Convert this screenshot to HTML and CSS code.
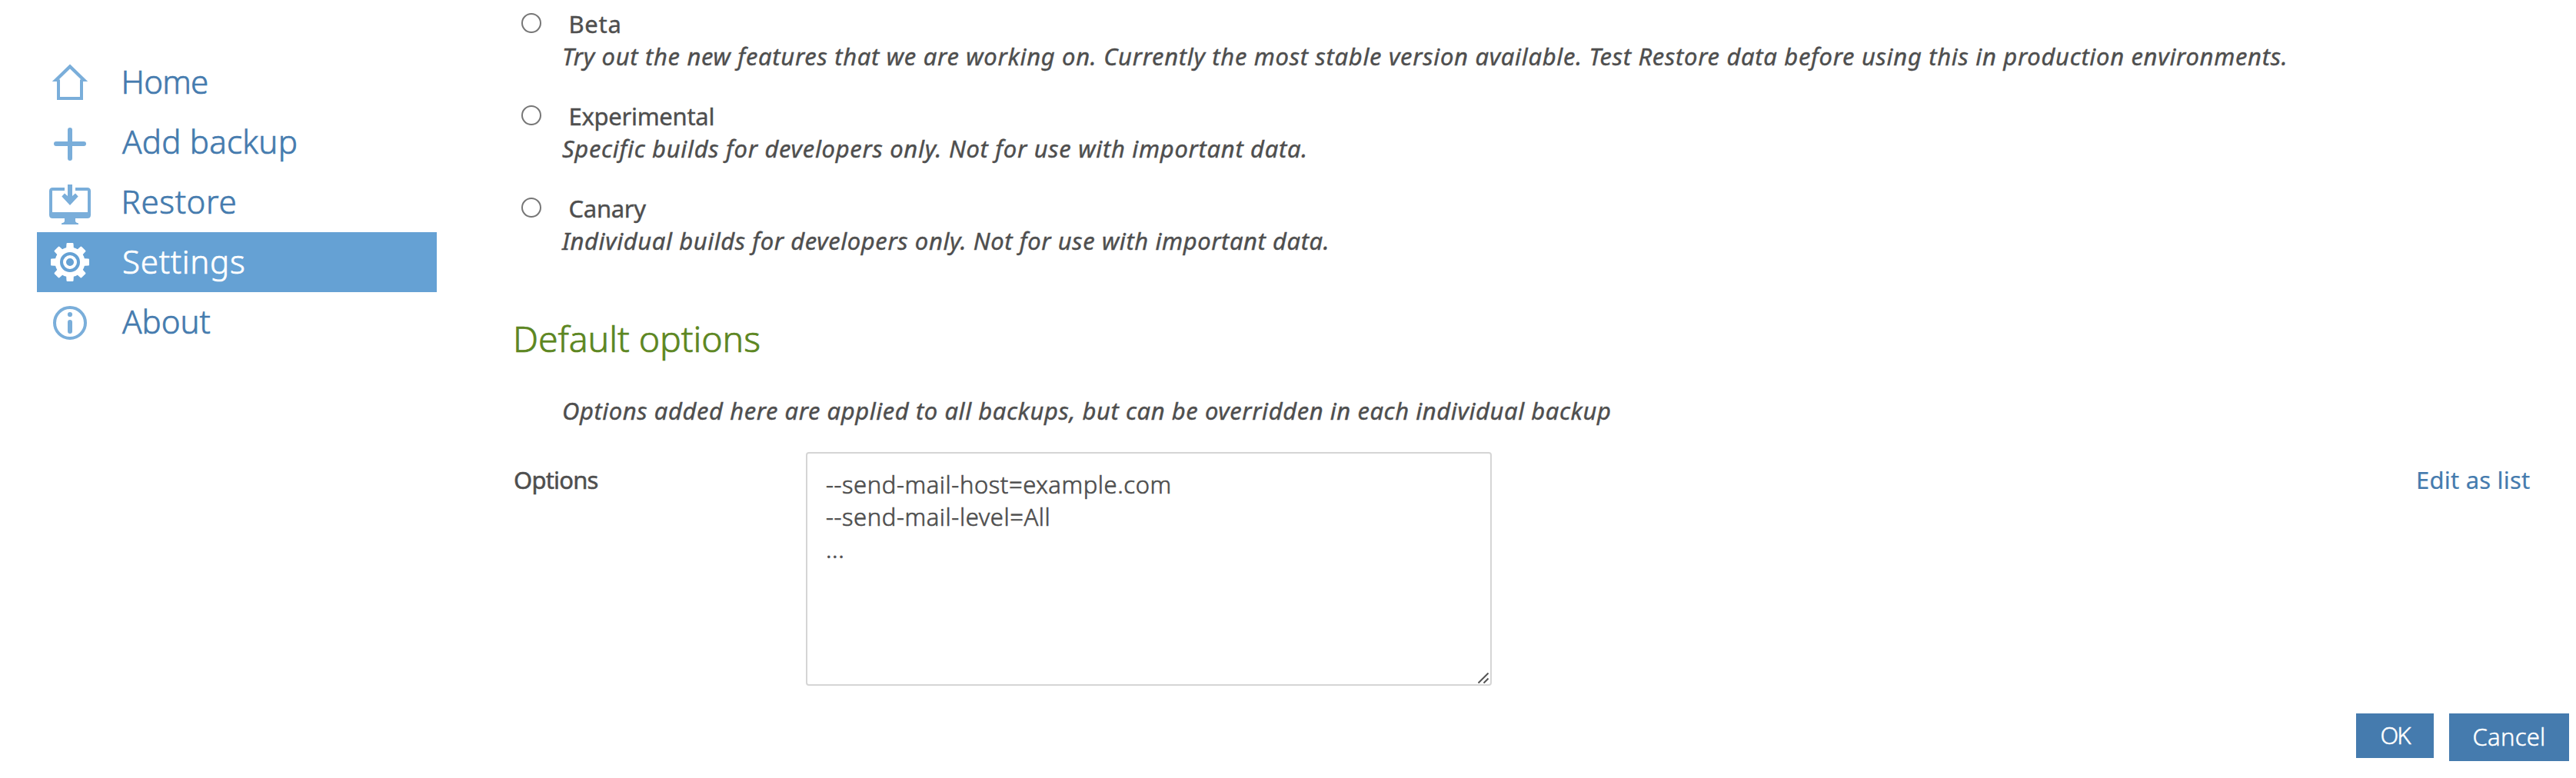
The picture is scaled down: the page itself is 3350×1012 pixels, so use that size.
FILE: index.html
```html
<!DOCTYPE html>
<html lang="en">
<head>
<meta charset="utf-8">
<title>Settings</title>
<link rel="stylesheet" href="styles.css">
</head>
<body>
<div class="app">
  <nav class="menu">
    <a class="item">
      <svg class="icon" viewBox="0 0 60 78"><path class="fill" fill-rule="evenodd" d="M33 15.500L56.200 38H50V62H16V38H9.800ZM33 21.500L18.500 35.500L20 35.500V58H46V35.500L47.500 35.500Z"/></svg>
      <span class="name home">Home</span>
    </a>
    <a class="item">
      <svg class="icon" viewBox="0 0 60 78"><path class="plus" d="M33 23V60M15 41H51"/></svg>
      <span class="name add">Add backup</span>
    </a>
    <a class="item">
      <svg class="icon" viewBox="0 0 60 78"><path class="fill" fill-rule="evenodd" d="M26 20V24H10V52H56V24H40V20H55.500Q60 20 60 24.500V55.500Q60 60 55.500 60H40V64Q40.500 65.500 44 66.500V68H22V66.500Q25.500 65.500 26 64V60H10.500Q6 60 6 55.500V24.500Q6 20 10.500 20Z"/><path class="fill" d="M30 16H36V31L40 27.500L43.700 31.500L33 43L22.300 31.500L26 27.500L30 31Z"/></svg>
      <span class="name restore">Restore</span>
    </a>
    <a class="item active">
      <svg class="icon" viewBox="0 0 60 78">
        <g class="fill">
          <path id="tooth" d="M28 24L28.500 15Q28.600 14 29.600 14H36.400Q37.400 14 37.500 15L38 24Z"/>
          <use href="#tooth" transform="rotate(45 33 39)"/><use href="#tooth" transform="rotate(90 33 39)"/><use href="#tooth" transform="rotate(135 33 39)"/><use href="#tooth" transform="rotate(180 33 39)"/><use href="#tooth" transform="rotate(225 33 39)"/><use href="#tooth" transform="rotate(270 33 39)"/><use href="#tooth" transform="rotate(315 33 39)"/>
          <path fill-rule="evenodd" d="M33 19.500A19.500 19.500 0 1 1 33 58.500A19.500 19.500 0 1 1 33 19.500ZM33 26A13 13 0 1 0 33 52A13 13 0 1 0 33 26Z"/>
        </g>
        <circle class="ring" cx="33" cy="39" r="7"/>
      </svg>
      <span class="name settings">Settings</span>
    </a>
    <a class="item">
      <svg class="icon" viewBox="0 0 60 78"><circle class="ring" cx="33" cy="40" r="20"/><circle class="fill" cx="33" cy="29" r="3.100"/><path class="plus" d="M33 39V51"/></svg>
      <span class="name about">About</span>
    </a>
  </nav>

  <main class="content">
    <div class="channels">
      <div class="channel">
        <label class="choice"><input type="radio" name="channel"><span class="label beta">Beta</span></label>
        <p class="hint">Try out the new features that we are working on. Currently the most stable version available. Test Restore data before using this in production environments.</p>
      </div>
      <div class="channel">
        <label class="choice"><input type="radio" name="channel"><span class="label">Experimental</span></label>
        <p class="hint">Specific builds for developers only. Not for use with important data.</p>
      </div>
      <div class="channel">
        <label class="choice"><input type="radio" name="channel"><span class="label">Canary</span></label>
        <p class="hint wide">Individual builds for developers only. Not for use with important data.</p>
      </div>
    </div>

    <h2 class="heading">Default options</h2>
    <p class="hint intro">Options added here are applied to all backups, but can be overridden in each individual backup</p>

    <div class="field">
      <label class="caption" for="options">Options</label>
      <div class="editor">
        <textarea id="options" class="box" spellcheck="false">--send-mail-host=example.com
--send-mail-level=All
...</textarea>
        <svg class="grip" viewBox="0 0 14 14"><path d="M.500 13.500L13.500 .500M7.500 13.500L13.500 7.500"/></svg>
      </div>
      <a class="toggle">Edit as list</a>
    </div>

    <div class="buttons">
      <button class="button ok">OK</button>
      <button class="button cancel">Cancel</button>
    </div>
  </main>
</div>
</body>
</html>
```
FILE: styles.css
```css
* { box-sizing: border-box; }
body {
  margin: 0;
  background: #fff;
  color: #4e4e4e;
  font: 400 31px/40px "Noto Sans", "Open Sans", sans-serif;
}
p, h2 { margin: 0; }
.app { display: flex; height: 1012px; overflow: hidden; }

.menu { width: 520px; margin: 68px 100px 0 48px; flex: none; }
.item {
  display: flex;
  height: 78px;
  padding-left: 10px;
  color: #457bae;
}
.icon { width: 60px; height: 78px; flex: none; color: #7aaeda; }
.name {
  padding-top: 9px;
  font-size: 42px;
  line-height: 57px;
  font-weight: 300;
  white-space: nowrap;
  -webkit-text-stroke: .7px currentColor;
}
.home { letter-spacing: -.75px; margin-left: 39.500px; }
.add { letter-spacing: .27px; margin-left: 41px; }
.restore { letter-spacing: .69px; margin-left: 39.500px; }
.settings { letter-spacing: .76px; margin-left: 41px; }
.about { margin-left: 41px; }
.active { background: #65a1d4; color: #fff; }
.active .icon { color: #fff; }
.fill { fill: currentColor; }
.plus { stroke: currentColor; stroke-width: 6; stroke-linecap: round; fill: none; }
.ring { stroke: currentColor; stroke-width: 4; fill: none; }

.content { flex: 1; padding-top: 11px; }
.channels { display: flex; flex-direction: column; gap: 38px; padding-left: 10px; }
.choice { display: flex; align-items: flex-start; }
.choice input {
  appearance: none;
  flex: none;
  width: 26px;
  height: 26px;
  margin: 6px 35.500px 0 0;
  border: 2px solid #767676;
  border-radius: 50%;
  background: #fff;
}
.label { letter-spacing: -.3px; -webkit-text-stroke: .4px currentColor; }
.beta { letter-spacing: .7px; }
.hint {
  margin: 2px 0 0 53px;
  font-style: italic;
  letter-spacing: .67px;
  white-space: nowrap;
  -webkit-text-stroke: .4px currentColor;
}
.wide { margin-left: 53px; letter-spacing: .56px; }
.heading {
  margin: 75px 0 0 -1px;
  color: #5c8621;
  font-size: 46.500px;
  font-weight: 300;
  line-height: 64px;
  letter-spacing: -.1px;
  -webkit-text-stroke: .7px currentColor;
}
.intro { margin: 42px 0 0 63px; letter-spacing: .55px; }

.field { display: flex; margin-top: 34px; }
.caption {
  width: 380px;
  padding-top: 16px;
  letter-spacing: -.8px;
  -webkit-text-stroke: .5px currentColor;
}
.editor { position: relative; width: 892px; height: 304px; }
.box {
  display: block;
  width: 100%;
  height: 100%;
  padding: 19px 24px;
  border: 2px solid #d5d5d5;
  border-radius: 4px;
  color: inherit;
  font: 300 31px/42px "Noto Sans", "Open Sans", sans-serif;
  letter-spacing: .54px;
  -webkit-text-stroke: .6px currentColor;
  resize: none;
  overflow: hidden;
}
.grip { position: absolute; right: 4px; bottom: 3px; width: 14px; height: 14px; }
.grip path { fill: none; stroke: #555; stroke-width: 2; }
.toggle {
  margin: 16px 0 0 1202px;
  color: #457bae;
  letter-spacing: .22px;
  white-space: nowrap;
  -webkit-text-stroke: .2px currentColor;
}

.buttons {
  display: flex;
  justify-content: flex-end;
  align-items: flex-start;
  gap: 20px;
  margin: 36px 9px 0 0;
}
.button {
  border: 0;
  background: #457bae;
  color: #fff;
  font: 300 31px/40px "Noto Sans", "Open Sans", sans-serif;
  text-align: center;
  -webkit-text-stroke: .5px currentColor;
}
.ok { width: 101px; padding: 8px 0 10px; letter-spacing: -2px; }
.cancel { width: 156px; padding: 10px 0 12px; letter-spacing: .27px; }
```
